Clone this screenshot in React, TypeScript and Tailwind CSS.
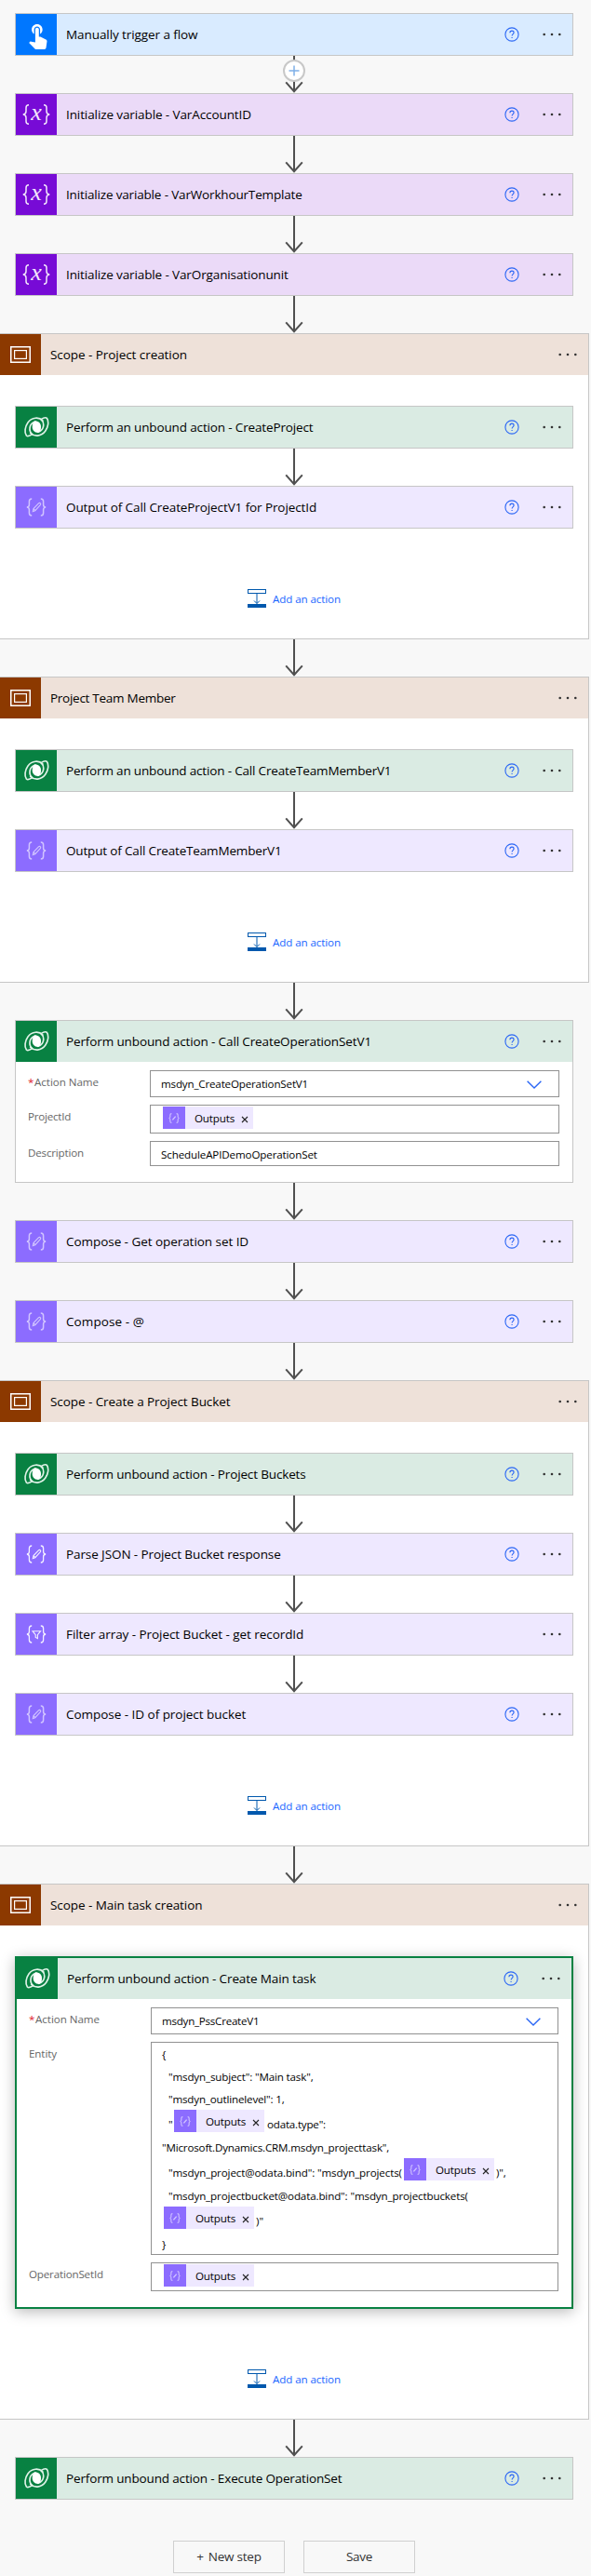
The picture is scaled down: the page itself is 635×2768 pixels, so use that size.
import type { ReactNode } from "react";

type IconKind = "trigger" | "variable" | "scope" | "dataverse" | "compose" | "parse" | "filter";

const iconBg: Record<IconKind, string> = {
  trigger: "bg-[#0077ff]",
  variable: "bg-[#770bd6]",
  scope: "bg-[#8c3900]",
  dataverse: "bg-[#088142]",
  compose: "bg-[#8c6cff]",
  parse: "bg-[#8c6cff]",
  filter: "bg-[#8c6cff]",
};

const headerBg: Record<IconKind, string> = {
  trigger: "bg-[#d9ebff]",
  variable: "bg-[#ebdaf8]",
  scope: "bg-[#eee1d9]",
  dataverse: "bg-[#daebe3]",
  compose: "bg-[#eee8ff]",
  parse: "bg-[#eee8ff]",
  filter: "bg-[#eee8ff]",
};

const lobe = "M20-20C8-32-15-32-28-14-38 0-40 18-33 28-29 32-20 28-14 24-26 14-26-10-5-17";

function Braces() {
  return (
    <>
      <path d="M6.2 1C4.2 1 3.4 1.9 3.4 3.8V7.2C3.4 9 2.6 9.8.9 10c1.7.2 2.5 1 2.5 2.8v3.4c0 1.9.8 2.8 2.8 2.8" />
      <path d="M15.8 1c2 0 2.8.9 2.8 2.8v3.4c0 1.8.8 2.6 2.5 2.8-1.7.2-2.5 1-2.5 2.8v3.4c0 1.9-.8 2.8-2.8 2.8" />
    </>
  );
}

function Pencil() {
  return (
    <path
      d="M7.300 14.600l.7-3 5.400-5.800c.7-.6 1.500-.6 2 0s.5 1.300-.1 1.900L9.800 13.700zM8 11.600l1.900 2"
      strokeWidth="1.100"
    />
  );
}

function Glyph({ kind }: { kind: IconKind }) {
  switch (kind) {
    case "trigger":
      return (
        <svg viewBox="0 0 24 24" className="ml-[2px] size-[31px]" fill="#fff">
          <path d="M9 11.240V7.500C9 6.120 10.120 5 11.500 5S14 6.120 14 7.500v3.740c1.210-.810 2-2.180 2-3.740C16 5.010 13.990 3 11.500 3S7 5.010 7 7.500c0 1.560.790 2.930 2 3.740zm9.840 4.630l-4.540-2.260c-.170-.070-.350-.110-.540-.110H13v-6c0-.830-.670-1.500-1.500-1.500S10 6.670 10 7.500v10.740l-3.430-.720c-.080-.010-.150-.030-.240-.030-.310 0-.590.130-.790.330l-.790.800 4.940 4.940c.270.270.650.440 1.060.440h6.790c.750 0 1.330-.550 1.440-1.280l.750-5.270c.010-.070.020-.140.020-.200 0-.620-.380-1.160-.910-1.380z" />
        </svg>
      );
    case "variable":
      return (
        <svg viewBox="0 -7 30 36" className="h-9 w-[30px]" fill="none" stroke="#f3e6fc" strokeWidth="1.500">
          <path d="M7 .8C4.800.8 4 1.800 4 3.800v3.700C4 9.700 3 10.700.8 11 3 11.300 4 12.300 4 14.500v3.700c0 2 .8 3 3 3" />
          <path d="M23 .8c2.200 0 3 1 3 3v3.700c0 2.200 1 3.200 3.200 3.500-2.200.3-3.200 1.300-3.200 3.500v3.700c0 2-.8 3-3 3" />
          <text x="15" y="17" textAnchor="middle" fontSize="26" fontStyle="italic" fontFamily="Liberation Serif, serif" fill="#f3e6fc" stroke="none">
            x
          </text>
        </svg>
      );
    case "scope":
      return (
        <svg viewBox="0 0 22 18" className="h-[18px] w-[22px]" fill="none" stroke="#fff">
          <rect x=".75" y=".75" width="20.500" height="16.500" strokeWidth="1.500" />
          <rect x="4.600" y="4.600" width="12.800" height="8.800" strokeWidth="1.200" />
        </svg>
      );
    case "dataverse":
      return (
        <svg
          viewBox="-43 -35 86 70"
          className="h-[23.3px] w-[28.7px]"
          fill="none"
          stroke="#dff2e7"
          strokeWidth="5"
          strokeLinecap="round"
          strokeLinejoin="round"
        >
          <path d={lobe} />
          <path transform="rotate(180)" d={lobe} />
          <path fill="#fff" stroke="none" d="M-5-19C8-18 14-10 14 0 14 9 12 15 5 19-8 18-14 10-14 0-14-9-12-15-5-19z" />
        </svg>
      );
    case "compose":
      return (
        <svg viewBox="0 0 22 20" className="h-5 w-[22px] opacity-60" fill="none" stroke="#fff" strokeWidth="1.500">
          <Braces />
          <Pencil />
        </svg>
      );
    case "parse":
      return (
        <svg viewBox="0 0 22 20" className="h-5 w-[22px] opacity-90" fill="none" stroke="#fff" strokeWidth="1.300">
          <Braces />
          <Pencil />
        </svg>
      );
    case "filter":
      return (
        <svg viewBox="0 0 22 20" className="h-5 w-[22px] opacity-90" fill="none" stroke="#fff" strokeWidth="1.300">
          <Braces />
          <path d="M7 6.700h8.600l-3.200 3.900v4l-2.200-1.200v-2.800z" strokeWidth="1.100" />
        </svg>
      );
  }
}

function Help() {
  return (
    <svg viewBox="0 0 16 16" className="size-4" fill="none" stroke="#2a66f5" strokeWidth="1.100">
      <circle cx="8" cy="8" r="7.100" />
      <path d="M5.900 6.200c0-1.300.9-2.100 2.100-2.100s2.100.8 2.100 1.900c0 1.600-2 1.700-2 3.600" />
      <path d="M8.100 10.900v1.200" strokeWidth="1.200" />
    </svg>
  );
}

function Dots() {
  return (
    <svg viewBox="0 0 20 4" className="h-1 w-5" fill="#333">
      <circle cx="1.700" cy="2" r="1.300" />
      <circle cx="10" cy="2" r="1.300" />
      <circle cx="18.300" cy="2" r="1.300" />
    </svg>
  );
}

interface StepProps {
  kind: IconKind;
  title: string;
  tracking: string;
  help?: boolean;
}

function Header({ kind, title, tracking, help = true }: StepProps) {
  return (
    <div className={`flex h-11 items-center pr-3 ${headerBg[kind]}`}>
      <div className={`flex size-11 shrink-0 items-center justify-center ${iconBg[kind]}`}>
        <Glyph kind={kind} />
      </div>
      <span className={`ml-2.5 grow text-[13.5px] whitespace-nowrap text-black ${tracking}`}>{title}</span>
      {help && (
        <span className="mr-[25px] -mt-px">
          <Help />
        </span>
      )}
      <Dots />
    </div>
  );
}

function Card(props: StepProps & { selected?: boolean; children?: ReactNode }) {
  const { selected, children, ...step } = props;
  return (
    <div
      className={
        selected
          ? "w-[600px] border-2 border-[#088142] bg-white shadow-[0_3px_14px_rgba(0,0,0,0.28)]"
          : "w-[600px] border border-[#c6c6c6] bg-white"
      }
    >
      <Header {...step} />
      {children && <div className="flex flex-col gap-2 pt-[9px] pr-3.5 pb-[17px] pl-[13px]">{children}</div>}
    </div>
  );
}

function Connector({ insert = false }: { insert?: boolean }) {
  return (
    <div className="relative flex h-10 w-6 justify-center">
      <svg viewBox="0 0 20 40" className="h-10 w-5" fill="none" stroke="#505050" strokeWidth="2">
        <path d="M10 0v38.500M1.200 28.300L10 38.200l8.800-9.900" />
      </svg>
      {insert && (
        <div className="absolute top-1 left-0 flex size-6 items-center justify-center rounded-full border-2 border-[#c8c8c8] bg-white">
          <svg viewBox="0 0 12 12" className="size-3" stroke="#7fb0e8" strokeWidth="1.500">
            <path d="M6 .5v11M.5 6h11" />
          </svg>
        </div>
      )}
    </div>
  );
}

function AddAction() {
  return (
    <div className="mt-[65px] mb-[33px] flex h-5 items-center gap-[7px]">
      <svg viewBox="0 0 20 20" className="size-5" fill="none" stroke="#0058ad">
        <rect x=".5" y=".5" width="19" height="4" />
        <path d="M10 5v10.500M7 12.500l3 3 3-3" />
        <rect x="0" y="16" width="20" height="4" fill="#0058ad" stroke="none" />
      </svg>
      <span className="pt-px text-[11.6px] leading-5 tracking-[-0.1px] text-[#1a66ff]">Add an action</span>
    </div>
  );
}

function Scope({ title, tracking, children }: { title: string; tracking: string; children: ReactNode }) {
  return (
    <div className="w-[634px] border border-[#c6c6c6] bg-white">
      <Header kind="scope" title={title} tracking={tracking} help={false} />
      <div className="flex flex-col items-center pt-[33px]">
        {children}
        <AddAction />
      </div>
    </div>
  );
}

function Field({ label, tracking, required, children }: { label: string; tracking: string; required?: boolean; children: ReactNode }) {
  return (
    <div className="flex items-start">
      <div className={`flex w-[131px] shrink-0 pt-px text-[11.6px] leading-6 text-[#666] ${tracking}`}>
        {required && <span className="w-[7px] text-[#e0202c]">*</span>}
        <span>{label}</span>
      </div>
      <div className="grow border border-[#919191] bg-white text-[11.6px] text-black">{children}</div>
    </div>
  );
}

function Select({ value, tracking }: { value: string; tracking: string }) {
  return (
    <div className="flex h-[27px] items-center justify-between pr-[18px] pl-[11px]">
      <span className={`pt-px ${tracking}`}>{value}</span>
      <svg viewBox="0 0 16 9" className="mt-0.5 h-[9px] w-4" fill="none" stroke="#2a66f5" strokeWidth="1.400">
        <path d="M.6.8L8 8 15.400.8" />
      </svg>
    </div>
  );
}

function Token() {
  return (
    <span className="flex h-6 w-[97px] shrink-0 bg-[#eee8ff]">
      <span className="flex size-6 items-center justify-center bg-[#8c6cff]">
        <svg viewBox="0 0 22 20" className="h-[11px] w-3 opacity-60" fill="none" stroke="#fff" strokeWidth="2">
          <Braces />
          <path d="M8 13.500l6-7" strokeWidth="2.600" />
        </svg>
      </span>
      <span className="ml-2.5 w-[50px] pt-px text-[11.6px] leading-6 tracking-[-0.16px] text-black">Outputs</span>
      <svg viewBox="0 0 8 8" className="mt-[9.5px] size-2" stroke="#222" strokeWidth="1.100">
        <path d="M1 1l6 6M7 1L1 7" />
      </svg>
    </span>
  );
}

function TokenField() {
  return (
    <div className="flex h-[29px] pt-px pl-[13px]">
      <Token />
    </div>
  );
}

function CodeLine({ className = "", children }: { className?: string; children: ReactNode }) {
  return <div className={`flex h-6 pt-px leading-6 whitespace-pre ${className}`}>{children}</div>;
}

function TokenLine({ className = "", children }: { className?: string; children: ReactNode }) {
  return <div className={`flex h-7 leading-6 whitespace-pre ${className}`}>{children}</div>;
}

function Button({ className, children }: { className: string; children: ReactNode }) {
  return (
    <button className={`flex h-[35px] w-[120px] items-center justify-center border border-[#d0d0d0] text-[13.5px] text-[#333] ${className}`}>
      {children}
    </button>
  );
}

export default function App() {
  return (
    <div className="h-[2768px] w-[635px] overflow-hidden bg-[#f8f8f8] font-['Open_Sans','Noto_Sans',sans-serif]">
      <div className="flex w-[632px] flex-col items-center pt-3.5">
        <Card kind="trigger" title="Manually trigger a flow" tracking="tracking-[-0.08px]" />
        <Connector insert />
        <Card kind="variable" title="Initialize variable - VarAccountID" tracking="tracking-[-0.1px]" />
        <Connector />
        <Card kind="variable" title="Initialize variable - VarWorkhourTemplate" tracking="tracking-[-0.16px]" />
        <Connector />
        <Card kind="variable" title="Initialize variable - VarOrganisationunit" tracking="tracking-[-0.12px]" />
        <Connector />

        <Scope title="Scope - Project creation" tracking="tracking-[-0.06px]">
          <Card kind="dataverse" title="Perform an unbound action - CreateProject" tracking="tracking-[-0.145px]" />
          <Connector />
          <Card kind="compose" title="Output of Call CreateProjectV1 for ProjectId" tracking="tracking-[-0.1px]" />
        </Scope>
        <Connector />

        <Scope title="Project Team Member" tracking="tracking-[-0.27px]">
          <Card kind="dataverse" title="Perform an unbound action - Call CreateTeamMemberV1" tracking="tracking-[-0.17px]" />
          <Connector />
          <Card kind="compose" title="Output of Call CreateTeamMemberV1" tracking="tracking-[-0.16px]" />
        </Scope>
        <Connector />

        <Card kind="dataverse" title="Perform unbound action - Call CreateOperationSetV1" tracking="tracking-[-0.12px]">
          <Field label="Action Name" tracking="tracking-[-0.04px]" required>
            <Select value="msdyn_CreateOperationSetV1" tracking="tracking-[-0.17px]" />
          </Field>
          <Field label="ProjectId" tracking="tracking-[-0.24px]">
            <TokenField />
          </Field>
          <Field label="Description" tracking="tracking-[-0.18px]">
            <div className="flex h-[25px] items-center pt-0.5 pl-[11px] tracking-[-0.13px]">ScheduleAPIDemoOperationSet</div>
          </Field>
        </Card>
        <Connector />
        <Card kind="compose" title="Compose - Get operation set ID" tracking="tracking-[-0.05px]" />
        <Connector />
        <Card kind="compose" title="Compose - @" tracking="tracking-[0.09px]" />
        <Connector />

        <Scope title="Scope - Create a Project Bucket" tracking="tracking-[-0.07px]">
          <Card kind="dataverse" title="Perform unbound action - Project Buckets" tracking="tracking-[-0.15px]" />
          <Connector />
          <Card kind="parse" title="Parse JSON - Project Bucket response" tracking="tracking-[-0.09px]" />
          <Connector />
          <Card kind="filter" title="Filter array - Project Bucket - get recordId" tracking="tracking-[-0.06px]" help={false} />
          <Connector />
          <Card kind="compose" title="Compose - ID of project bucket" tracking="tracking-[-0.03px]" />
        </Scope>
        <Connector />

        <Scope title="Scope - Main task creation" tracking="tracking-[-0.06px]">
          <Card kind="dataverse" title="Perform unbound action - Create Main task" tracking="tracking-[-0.12px]" selected>
            <Field label="Action Name" tracking="tracking-[-0.04px]" required>
              <Select value="msdyn_PssCreateV1" tracking="tracking-[-0.25px]" />
            </Field>
            <Field label="Entity" tracking="tracking-[-0.1px]">
              <div className="flex h-[227px] flex-col pl-[11px]">
                <CodeLine>{"{"}</CodeLine>
                <CodeLine className="pl-[7px] tracking-[-0.15px]">{'"msdyn_subject": "Main task",'}</CodeLine>
                <CodeLine className="pl-[7px] tracking-[-0.17px]">{'"msdyn_outlinelevel": 1,'}</CodeLine>
                <TokenLine className="pl-[7px] tracking-[-0.2px]">
                  <span className="w-[6px] pt-1">{'"'}</span>
                  <Token />
                  <span className="pt-1 pl-[3px]">{'odata.type":'}</span>
                </TokenLine>
                <CodeLine className="tracking-[-0.17px]">{'"Microsoft.Dynamics.CRM.msdyn_projecttask",'}</CodeLine>
                <TokenLine className="pl-[7px] tracking-[-0.12px]">
                  <span className="w-[253px] pt-1">{'"msdyn_project@odata.bind": "msdyn_projects('}</span>
                  <Token />
                  <span className="pt-1 pl-[2px]">{')",'}</span>
                </TokenLine>
                <CodeLine className="pl-[7px] tracking-[-0.13px]">{'"msdyn_projectbucket@odata.bind": "msdyn_projectbuckets('}</CodeLine>
                <TokenLine className="pl-0.5">
                  <Token />
                  <span className="pt-1 pl-[2px]">{')"'}</span>
                </TokenLine>
                <CodeLine>{"}"}</CodeLine>
              </div>
            </Field>
            <Field label="OperationSetId" tracking="tracking-[-0.17px]">
              <TokenField />
            </Field>
          </Card>
        </Scope>
        <Connector />

        <Card kind="dataverse" title="Perform unbound action - Execute OperationSet" tracking="tracking-[-0.15px]" />
        <div className="mt-11 flex gap-5">
          <Button className="tracking-[-0.22px]">
            <span className="mr-[5px]">+</span>New step
          </Button>
          <Button className="tracking-[-0.31px]">Save</Button>
        </div>
      </div>
    </div>
  );
}
